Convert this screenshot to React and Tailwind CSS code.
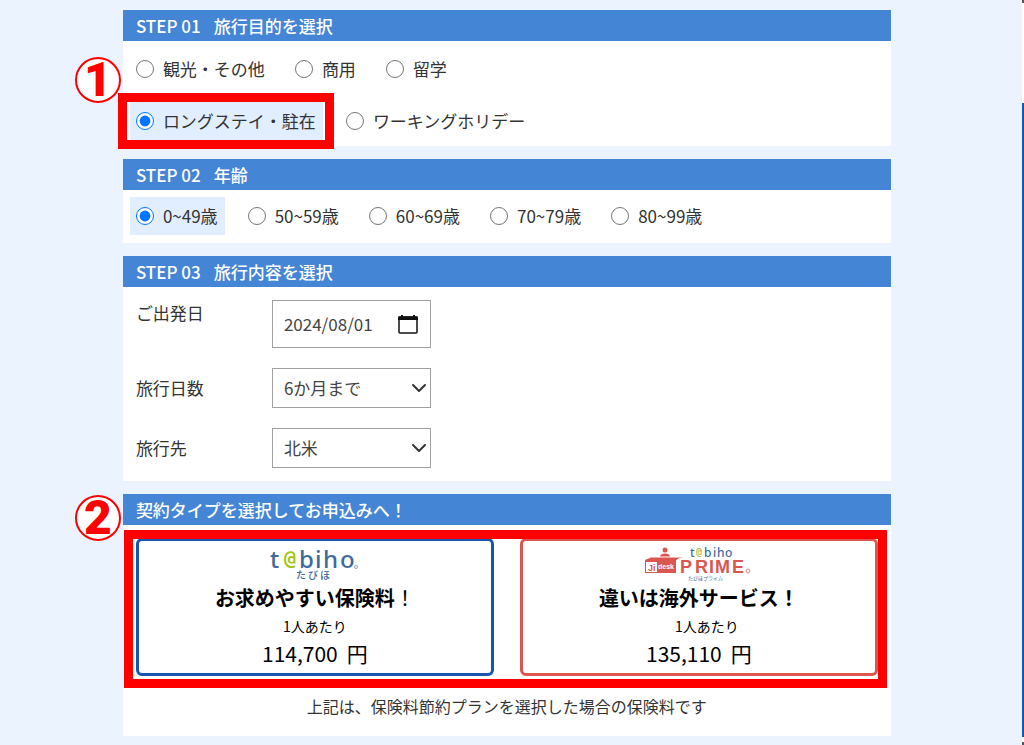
import React, { useState } from 'react'
import { ChevronDown } from 'lucide-react'

const purposes = ['観光・その他', '商用', '留学', 'ロングステイ・駐在', 'ワーキングホリデー']
const ages = ['0~49歳', '50~59歳', '60~69歳', '70~79歳', '80~99歳']

const TabihoLogo = () => (
  <svg width="92" height="41" viewBox="0 0 92 41" className="overflow-visible" role="img" aria-label="t@biho たびほ">
    <text y="27" fontFamily="'Noto Sans', sans-serif" fontSize="24" fontWeight="500" fill="#3f6a9c">
      <tspan x="1">t</tspan>
      <tspan x="30">b</tspan>
      <tspan x="46">i</tspan>
      <tspan x="54">h</tspan>
      <tspan x="71">o</tspan>
    </text>
    <text x="15" y="24" fontFamily="'DejaVu Sans Mono', monospace" fontSize="20" fontWeight="700" fill="#a3c614">@</text>
    <circle cx="87" cy="26" r="1.5" fill="none" stroke="#8fa6c4" />
    <text y="38" fontFamily="'Noto Sans CJK JP', sans-serif" fontSize="10" fontWeight="500" fill="#3f6a9c">
      <tspan x="27">た</tspan>
      <tspan x="39">び</tspan>
      <tspan x="51">ほ</tspan>
    </text>
  </svg>
)

const PrimeLogo = () => (
  <svg width="108" height="41" viewBox="0 0 108 41" className="overflow-visible" role="img" aria-label="t@biho PRIME たびほプライム">
    {/* service desk */}
    <g fill="#dc5650">
      <circle cx="20" cy="9" r="2.5" />
      <path d="M15 15.500c0-4 10-4 10 0z" />
      <path d="M6 16.500h33q-6 0-8 3V32H0V19z" />
    </g>
    <rect x="1" y="21" width="11" height="10" fill="#fff" />
    <text x="3" y="30" fontFamily="'Liberation Sans', sans-serif" fontSize="9" fontWeight="700" fill="#dc5650">Ji</text>
    <text x="13" y="28" fontFamily="'Liberation Sans', sans-serif" fontSize="7" fontWeight="700" fill="#fff">desk</text>
    <text y="16" fontFamily="'Noto Sans', sans-serif" fontSize="12" fontWeight="500" fill="#3f6a9c">
      <tspan x="45">t</tspan>
      <tspan x="59">b</tspan>
      <tspan x="68">i</tspan>
      <tspan x="72">h</tspan>
      <tspan x="80">o</tspan>
    </text>
    <text x="51" y="14" fontFamily="'DejaVu Sans Mono', monospace" fontSize="10" fontWeight="700" fill="#b3c14f">@</text>
    <text y="32" fontFamily="'Liberation Sans', sans-serif" fontSize="18" fontWeight="700" fill="#dc5650">
      <tspan x="35">P</tspan>
      <tspan x="50">R</tspan>
      <tspan x="64">I</tspan>
      <tspan x="70">M</tspan>
      <tspan x="87">E</tspan>
    </text>
    <circle cx="103" cy="30" r="2" fill="none" stroke="#e58d88" />
    <text x="43" y="39" fontFamily="'Noto Sans CJK JP', sans-serif" fontSize="5" fill="#3f6a9c">たびほプライム</text>
  </svg>
)

const Section = ({ title, step, children }) => (
  <section className="bg-white">
    <h2 className="h-[31px] px-[13px] flex items-center gap-[13px] bg-[#4585d6] text-white text-[17px] font-medium">
      {step && <span>{step}</span>}
      <span>{title}</span>
    </h2>
    {children}
  </section>
)

const Marker = ({ children }) => (
  <span className="absolute w-[46px] h-[46px] rounded-full border-2 border-[#ff0000] bg-white flex items-center justify-center font-['Roboto',sans-serif] font-black text-5xl leading-none text-[#ff0000] -left-12 top-0">
    {children}
  </span>
)

const RadioItem = ({ name, label, checked, onChange, children }) => (
  <label
    className={`relative h-[38px] pl-[6px] pr-[7px] flex items-center gap-[9px] whitespace-nowrap ${checked ? 'bg-[#e1eeff]' : ''}`}
  >
    <input type="radio" name={name} checked={checked} onChange={onChange} className="w-[18px] h-[18px] m-0" />
    {label}
    {children}
  </label>
)

const SelectBox = ({ id, options }) => (
  <div className="relative w-[159px]">
    <select id={id} className="w-full h-10 pl-[11px] pr-8 appearance-none bg-white border border-[#a0a0a0] rounded-none text-[#444]">
      {options.map((o) => (
        <option key={o}>{o}</option>
      ))}
    </select>
    <ChevronDown className="absolute right-0 top-2 w-6 h-6 text-[#333] pointer-events-none" strokeWidth={2} />
  </div>
)

const PlanCard = ({ logo, title, price, border, noteClass }) => (
  <button type="button" className={`flex-1 h-[138px] flex flex-col items-center bg-white border-[3px] rounded-md text-black ${border}`}>
    <span className="h-[41px]">{logo}</span>
    <span className="text-xl leading-8 font-bold whitespace-nowrap">{title}</span>
    <span className={`text-sm leading-6 ${noteClass}`}>1人あたり</span>
    <span className="flex gap-[9px] text-[21px] leading-[31px]">
      <span>{price}</span>
      <span>円</span>
    </span>
  </button>
)

export default function App() {
  const [purpose, setPurpose] = useState(purposes[3])
  const [age, setAge] = useState(ages[0])
  const [date, setDate] = useState('2024/08/01')

  const purposeItem = (p) => (
    <RadioItem key={p} name="purpose" label={p} checked={purpose === p} onChange={() => setPurpose(p)}>
      {p === purposes[3] && (
        <span className="absolute -left-3 -right-[11px] -top-[9px] -bottom-[9px] border-[9px] border-[#ff0000] pointer-events-none" />
      )}
    </RadioItem>
  )

  return (
    <div className="min-h-screen flex bg-[#eaf3ff] font-['Noto_Sans_CJK_JP',sans-serif] text-[17px] text-[#333]">
      <main className="w-3/4 ml-[12%] pt-[10px] pb-[9px] self-start flex flex-col gap-[13px]">
        <Section step="STEP 01" title="旅行目的を選択">
          <div className="relative pt-[9px] pb-[6px] px-[7px] flex flex-col gap-[14px]">
            <div className="absolute left-0 top-4">
              <Marker>1</Marker>
            </div>
            <div className="flex gap-[17px]">{purposes.slice(0, 3).map(purposeItem)}</div>
            <div className="flex gap-[17px]">{purposes.slice(3).map(purposeItem)}</div>
          </div>
        </Section>

        <Section step="STEP 02" title="年齢">
          <div className="p-[7px] pb-2 flex gap-[17px]">
            {ages.map((a) => (
              <RadioItem key={a} name="age" label={a} checked={age === a} onChange={() => setAge(a)} />
            ))}
          </div>
        </Section>

        <Section step="STEP 03" title="旅行内容を選択">
          <div className="p-[13px] grid grid-cols-[136px_auto] gap-y-5 items-center">
            <label htmlFor="departure" className="self-start">ご出発日</label>
            <div className="w-[159px] h-12 flex items-center border border-[#a0a0a0] bg-white">
              <input
                id="departure"
                type="text"
                value={date}
                onChange={(e) => setDate(e.target.value)}
                className="flex-1 min-w-0 pl-[11px] text-[#444] outline-none"
              />
              <button type="button" aria-label="カレンダー" className="pr-3">
                <svg width="20" height="20" viewBox="0 0 20 20">
                  <rect x="1" y="3" width="18" height="16" rx="1" fill="none" stroke="#111" strokeWidth="1.500" />
                  <path d="M0 2.500h3V1h2v1.500h10V1h2v1.500h3V6H0z" fill="#111" />
                </svg>
              </button>
            </div>
            <label htmlFor="days">旅行日数</label>
            <SelectBox id="days" options={['6か月まで', '1か月まで', '3か月まで']} />
            <label htmlFor="area">旅行先</label>
            <SelectBox id="area" options={['北米', 'ヨーロッパ', 'アジア']} />
          </div>
        </Section>

        <Section title="契約タイプを選択してお申込みへ！">
          <div className="relative p-[13px]">
            <div className="absolute left-0 -top-[30px]">
              <Marker>2</Marker>
            </div>
            <div className="relative flex gap-[26px]">
              <PlanCard
                logo={<TabihoLogo />}
                title={<>お求めやすい保険料<span className="font-normal">！</span></>}
                price="114,700"
                border="border-[#1a55b0]"
                noteClass=""
              />
              <PlanCard
                logo={<PrimeLogo />}
                title="違いは海外サービス！"
                price="135,110"
                border="border-[#dc5650]"
                noteClass="pl-4"
              />
              <span className="absolute -left-3 -right-[9px] -top-2 -bottom-3 border-[9px] border-[#ff0000] pointer-events-none" />
            </div>
            <p className="pt-[18px] pb-[5px] text-center text-base leading-6">上記は、保険料節約プランを選択した場合の保険料です</p>
          </div>
        </Section>
      </main>
      <div className="ml-auto w-[2px] flex flex-col">
        <div className="h-[3px] bg-[#555]" />
        <div className="h-[100px] bg-white" />
        <div className="flex-1 bg-[#1a55b0]" />
        <div className="h-[5px] bg-white" />
        <div className="h-[3px] bg-[#555]" />
      </div>
    </div>
  )
}
